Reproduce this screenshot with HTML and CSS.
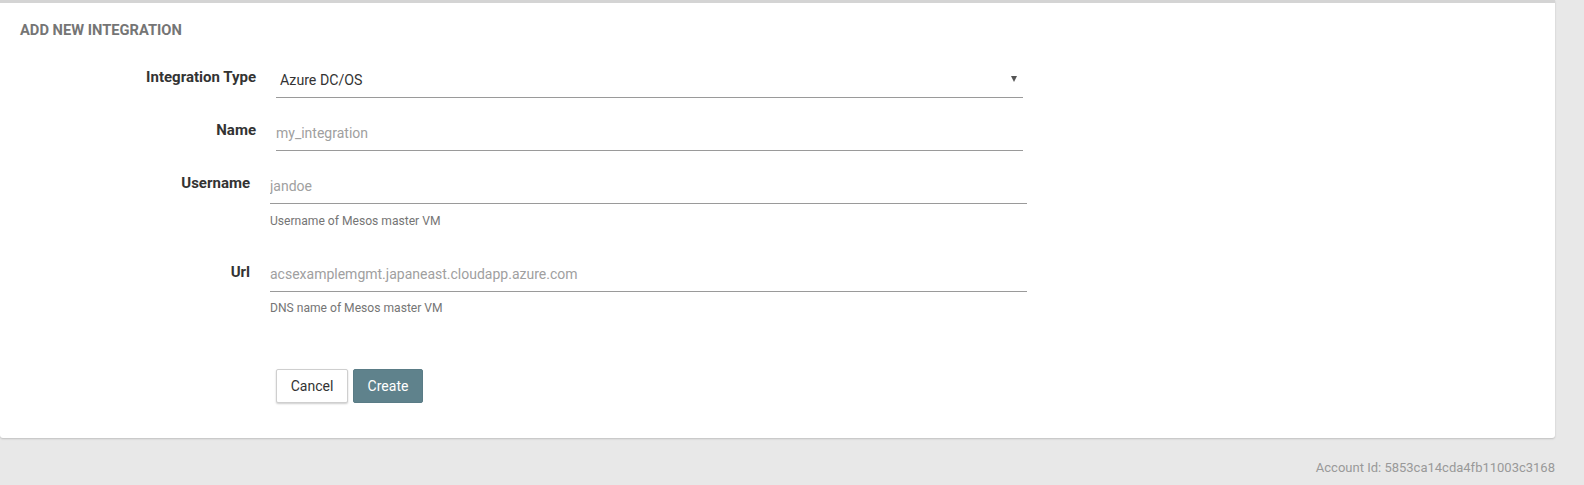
FILE: index.html
```html
<!DOCTYPE html>
<html lang="en">
<head>
<meta charset="utf-8">
<title>Add New Integration</title>
<link rel="stylesheet" href="styles.css">
</head>
<body>
<div class="page">
  <section class="card">
    <h2 class="card-title">ADD NEW INTEGRATION</h2>
    <form class="form">
      <div class="field">
        <label class="field-label">Integration Type</label>
        <div class="field-control">
          <div class="select">
            <span class="select-value">Azure DC/OS</span>
            <span class="select-arrow"></span>
          </div>
        </div>
      </div>
      <div class="field">
        <label class="field-label">Name</label>
        <div class="field-control">
          <input class="text-input" type="text" placeholder="my_integration">
        </div>
      </div>
      <div class="field field-wide">
        <label class="field-label">Username</label>
        <div class="field-control">
          <input class="text-input" type="text" placeholder="jandoe">
          <div class="help">Username of Mesos master VM</div>
        </div>
      </div>
      <div class="field field-wide field-url">
        <label class="field-label">Url</label>
        <div class="field-control">
          <input class="text-input" type="text" placeholder="acsexamplemgmt.japaneast.cloudapp.azure.com">
          <div class="help help-url">DNS name of Mesos master VM</div>
        </div>
      </div>
      <div class="actions">
        <button type="button" class="btn btn-default">Cancel</button>
        <button type="button" class="btn btn-primary">Create</button>
      </div>
    </form>
  </section>
  <div class="account">Account Id: 5853ca14cda4fb11003c3168</div>
</div>
</body>
</html>
```

FILE: styles.css
```css
* {
  box-sizing: border-box;
}

html, body {
  margin: 0;
  padding: 0;
}

body {
  background: #e8e8e8;
  font-family: Roboto, "Liberation Sans", Arial, sans-serif;
  color: #333;
  width: 1584px;
  height: 485px;
  overflow: hidden;
}

.page {
  display: flex;
  flex-direction: column;
  padding-right: 29px;
}

.card {
  background: #fff;
  border-top: 3px solid #d4d4d4;
  border-radius: 0 0 3px 3px;
  box-shadow: 0 1px 2px rgba(0, 0, 0, 0.18);
  padding: 17px 0 35px 0;
}

.card-title {
  margin: 0 0 21px 20px;
  font-size: 14.7px;
  line-height: 20px;
  font-weight: 700;
  color: #757575;
}

.form {
  display: flex;
  flex-direction: column;
}

.field {
  display: grid;
  grid-template-columns: 256px 747px;
  column-gap: 20px;
  margin-bottom: 16px;
}

.field-wide {
  grid-template-columns: 250px 757px;
  margin-bottom: 26px;
}

.field-url {
  margin-bottom: 0;
}

.field-label {
  text-align: right;
  font-size: 15px;
  font-weight: 700;
  line-height: 20px;
  padding-top: 6px;
  color: #333;
}

.field-url .field-label {
  padding-top: 7px;
}

.field-control {
  display: flex;
  flex-direction: column;
}

.select {
  display: flex;
  align-items: center;
  justify-content: space-between;
  height: 37px;
  border-bottom: 1px solid #9a9a9a;
  padding: 1px 4px 0 4px;
}

.select-value {
  font-size: 14.2px;
  color: #333;
}

.select-arrow {
  width: 0;
  height: 0;
  border-left: 3.5px solid transparent;
  border-right: 3.5px solid transparent;
  border-top: 6px solid #555;
  margin-right: 2px;
  margin-top: -2px;
}

.text-input {
  display: block;
  width: 100%;
  height: 37px;
  border: 0;
  border-bottom: 1px solid #9a9a9a;
  padding: 1px 0 0 0;
  margin: 0;
  font-family: inherit;
  font-size: 14px;
  color: #333;
  background: transparent;
  outline: none;
}

.text-input::placeholder {
  color: #a0a0a0;
  opacity: 1;
}

.help {
  margin-top: 9px;
  font-size: 12.1px;
  line-height: 16px;
  color: #757575;
}

.help-url {
  margin-top: 8px;
}

.actions {
  display: flex;
  gap: 5px;
  margin-top: 53px;
  padding-left: 276px;
}

.btn {
  height: 34px;
  font-family: inherit;
  font-size: 14px;
  border-radius: 2px;
  cursor: pointer;
  padding: 0 12px;
}

.btn-default {
  width: 72px;
  background: #fff;
  color: #333;
  border: 1px solid #cfcfcf;
  box-shadow: 0 1px 2px rgba(0, 0, 0, 0.2);
}

.btn-primary {
  width: 70px;
  background: #5f828c;
  color: #fff;
  border: 1px solid #5a7c86;
}

.account {
  align-self: flex-end;
  margin-top: 22px;
  font-size: 13px;
  line-height: 16px;
  color: #999;
}
```
